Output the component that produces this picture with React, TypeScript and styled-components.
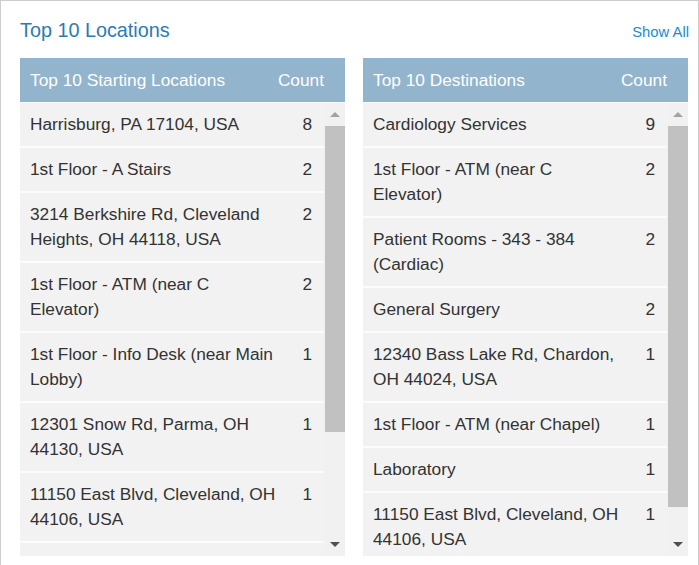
import React from "react";
import styled, { createGlobalStyle } from "styled-components";

const GlobalStyle = createGlobalStyle`
  html, body {
    margin: 0;
    padding: 0;
    background: #ffffff;
  }
  body {
    font-family: "Liberation Sans", Arial, sans-serif;
    color: #333333;
  }
`;

const Frame = styled.div`
  box-sizing: border-box;
  width: 699px;
  height: 565px;
  border: 1px solid #cccccc;
  border-bottom: none;
  padding: 0 10px 0 19px;
  overflow: hidden;
`;

const TitleRow = styled.div`
  display: flex;
  justify-content: space-between;
  align-items: baseline;
  height: 57px;
  padding-top: 17px;
  box-sizing: border-box;
`;

const Title = styled.h2`
  margin: 0;
  font-size: 19.8px;
  font-weight: normal;
  color: #2a7bb5;
  line-height: 24px;
`;

const ShowAll = styled.a`
  font-size: 14.8px;
  color: #1a8ccc;
  text-decoration: none;
  cursor: pointer;
  margin-right: -1px;
`;

const Panels = styled.div`
  display: grid;
  grid-template-columns: 325px 325px;
  column-gap: 18px;
`;

const Panel = styled.div`
  display: flex;
  flex-direction: column;
`;

const PanelHeader = styled.div`
  display: flex;
  justify-content: space-between;
  align-items: center;
  height: 44px;
  padding: 0 21px 0 10px;
  background: #92b4cc;
  color: #ffffff;
  font-size: 17.3px;
  border-bottom: 1px solid #fafafa;
`;

const PanelBody = styled.div`
  display: flex;
  height: 453px;
`;

const List = styled.div`
  flex: 1;
  overflow: hidden;
  display: flex;
  flex-direction: column;
`;

const Row = styled.div`
  display: flex;
  flex-shrink: 0;
  background: #f2f2f2;
  border-bottom: 2px solid #fcfcfc;
  padding: 9px 12px 9px 10px;
  font-size: 17.3px;
  line-height: 25px;
  color: #333333;
`;

const Name = styled.div`
  flex: 1;
`;

const Count = styled.div`
  width: 30px;
  text-align: right;
`;

const ScrollTrack = styled.div`
  width: 21px;
  background: #f1f1f1;
  display: flex;
  flex-direction: column;
  align-items: center;
`;

const ArrowButton = styled.div`
  height: 23px;
  width: 100%;
  display: flex;
  align-items: center;
  justify-content: center;
  flex-shrink: 0;
`;

const Arrow = styled.div<{ $down?: boolean; $color: string }>`
  width: 0;
  height: 0;
  border-left: 5px solid transparent;
  border-right: 5px solid transparent;
  ${(p) =>
    p.$down
      ? `border-top: 5px solid ${p.$color};`
      : `border-bottom: 5px solid ${p.$color};`}
`;

const Thumb = styled.div<{ $height: number }>`
  width: 20px;
  height: ${(p) => p.$height}px;
  background: #c1c1c1;
  flex-shrink: 0;
`;

const Spacer = styled.div`
  flex: 1;
`;

type Item = { name: string; count: number };

const starting: Item[] = [
  { name: "Harrisburg, PA 17104, USA", count: 8 },
  { name: "1st Floor - A Stairs", count: 2 },
  { name: "3214 Berkshire Rd, Cleveland Heights, OH 44118, USA", count: 2 },
  { name: "1st Floor - ATM (near C Elevator)", count: 2 },
  { name: "1st Floor - Info Desk (near Main Lobby)", count: 1 },
  { name: "12301 Snow Rd, Parma, OH 44130, USA", count: 1 },
  { name: "11150 East Blvd, Cleveland, OH 44106, USA", count: 1 },
  { name: "Main Entrance", count: 1 },
  { name: "Parking Garage A", count: 1 },
  { name: "Heart & Vascular Institute", count: 1 },
];

const destinations: Item[] = [
  { name: "Cardiology Services", count: 9 },
  { name: "1st Floor - ATM (near C Elevator)", count: 2 },
  { name: "Patient Rooms - 343 - 384 (Cardiac)", count: 2 },
  { name: "General Surgery", count: 2 },
  { name: "12340 Bass Lake Rd, Chardon, OH 44024, USA", count: 1 },
  { name: "1st Floor - ATM (near Chapel)", count: 1 },
  { name: "Laboratory", count: 1 },
  { name: "11150 East Blvd, Cleveland, OH 44106, USA", count: 1 },
  { name: "Radiology", count: 1 },
  { name: "Main Lobby", count: 1 },
];

interface TableProps {
  title: string;
  items: Item[];
  thumbHeight: number;
}

const LocationTable: React.FunctionComponent<TableProps> = ({ title, items, thumbHeight }) => (
  <Panel>
    <PanelHeader>
      <span>{title}</span>
      <span>Count</span>
    </PanelHeader>
    <PanelBody>
      <List>
        {items.map((item, index) => (
          <Row key={index}>
            <Name>{item.name}</Name>
            <Count>{item.count}</Count>
          </Row>
        ))}
      </List>
      <ScrollTrack>
        <ArrowButton>
          <Arrow $color="#a3a3a3" />
        </ArrowButton>
        <Thumb $height={thumbHeight} />
        <Spacer />
        <ArrowButton>
          <Arrow $down $color="#505050" />
        </ArrowButton>
      </ScrollTrack>
    </PanelBody>
  </Panel>
);

const App = () => (
  <>
    <GlobalStyle />
    <Frame>
      <TitleRow>
        <Title>Top 10 Locations</Title>
        <ShowAll>Show All</ShowAll>
      </TitleRow>
      <Panels>
        <LocationTable title="Top 10 Starting Locations" items={starting} thumbHeight={306} />
        <LocationTable title="Top 10 Destinations" items={destinations} thumbHeight={381} />
      </Panels>
    </Frame>
  </>
);

export default App;
